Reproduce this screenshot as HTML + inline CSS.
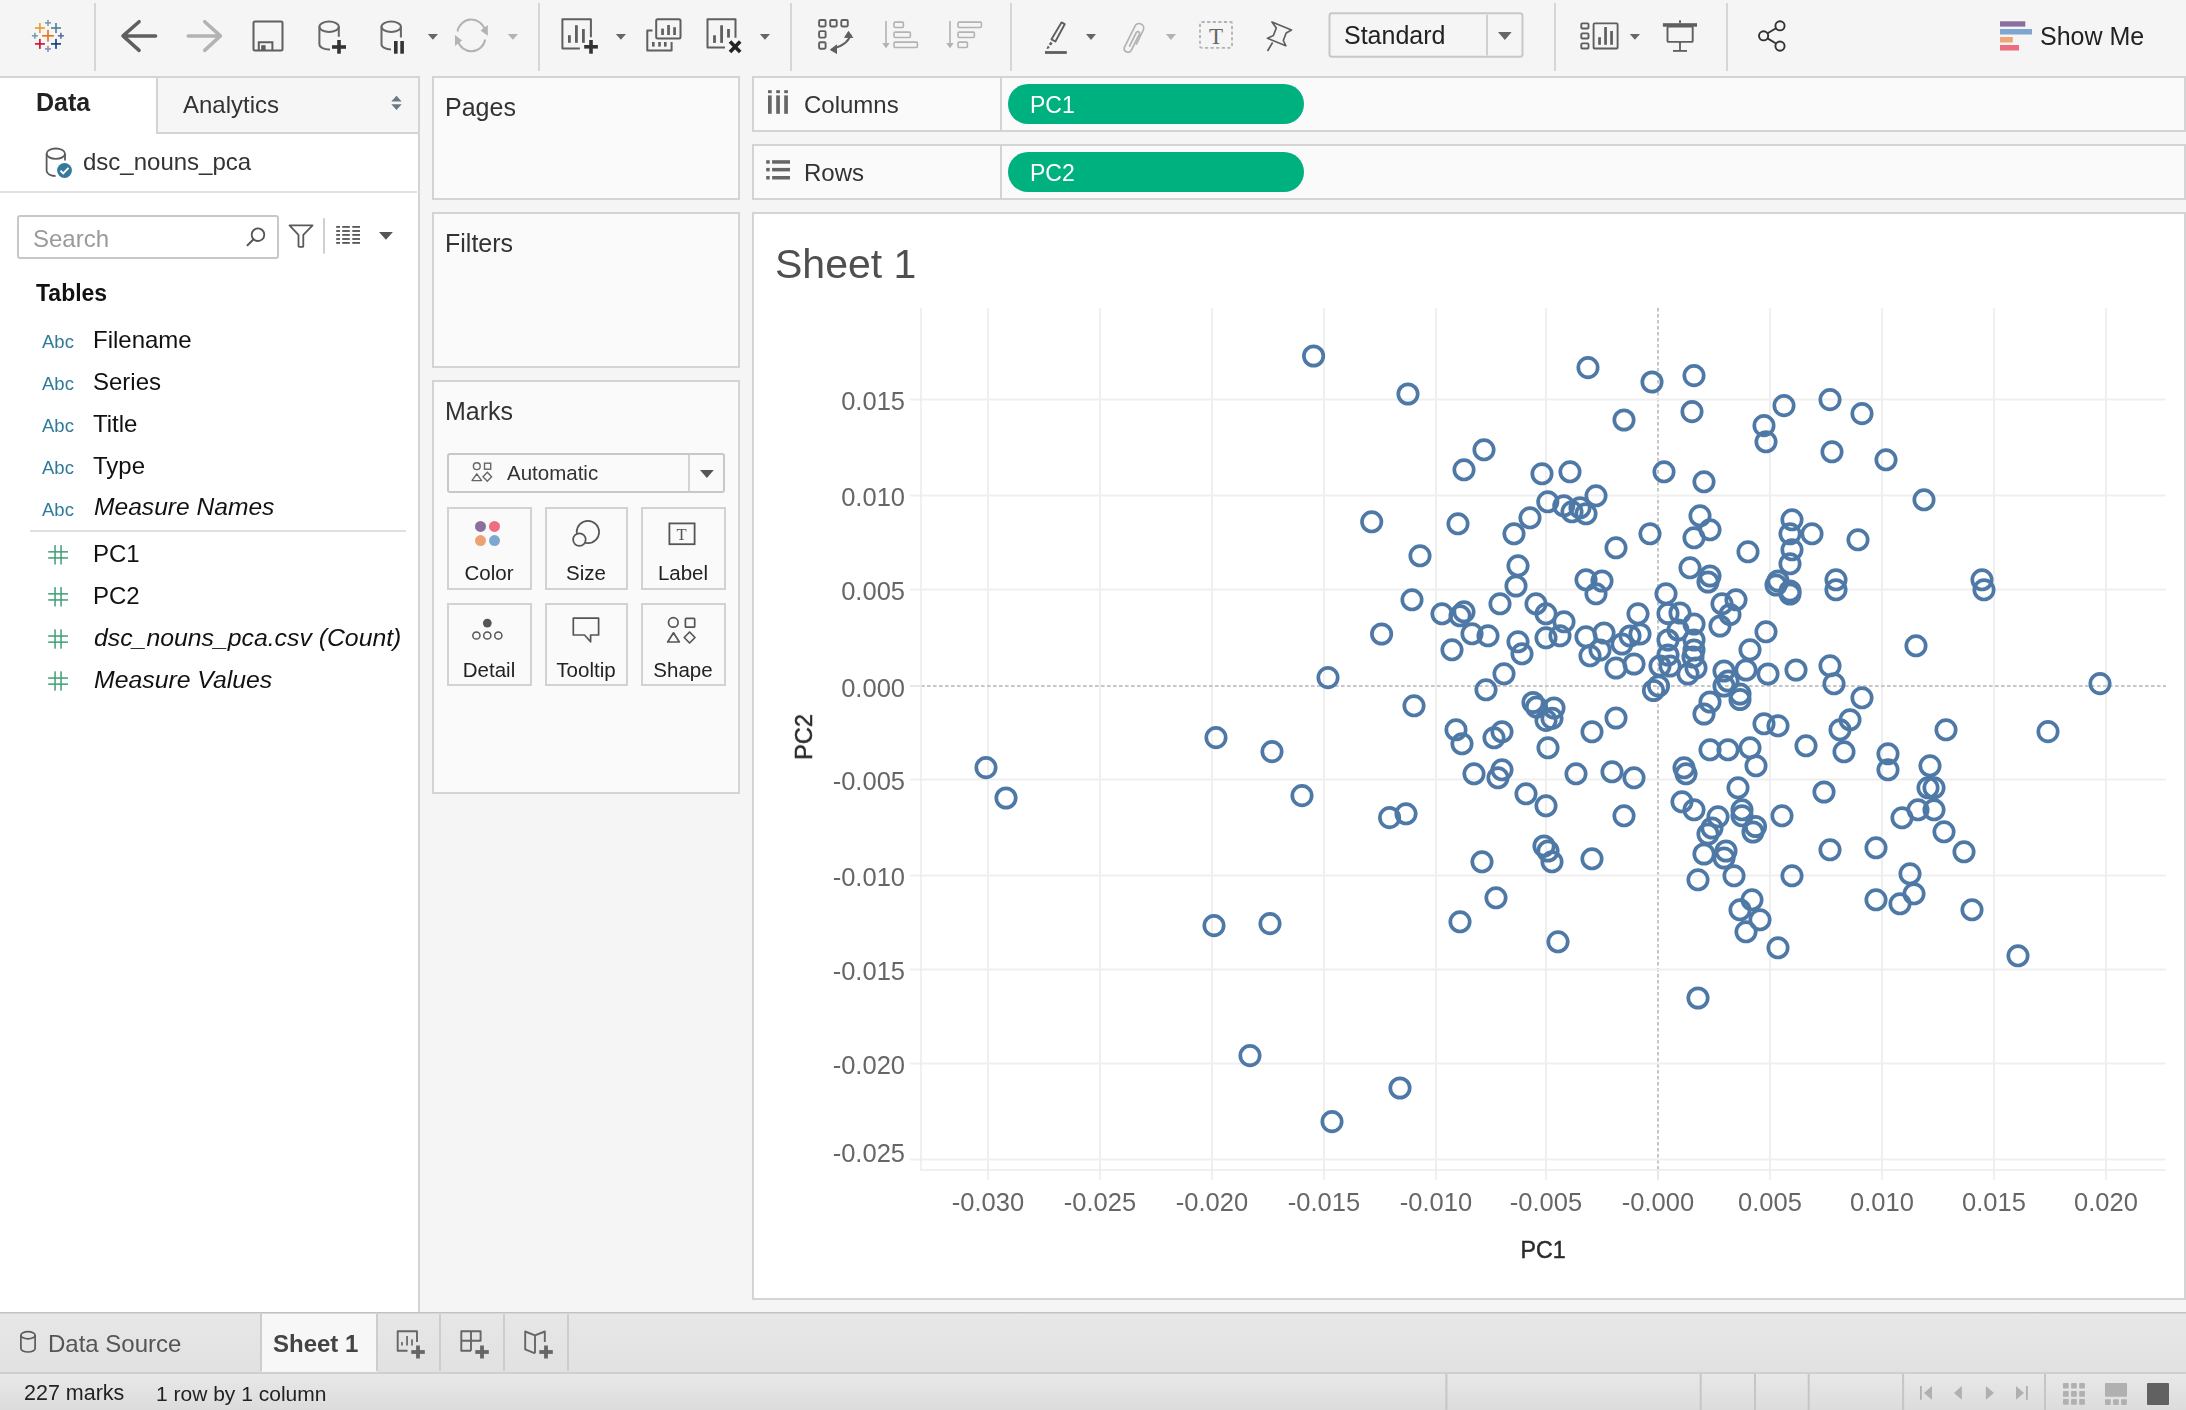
<!DOCTYPE html>
<html><head><meta charset="utf-8"><title>Tableau - Sheet 1</title>
<style>
html,body{margin:0;padding:0;}
body{width:2186px;height:1410px;position:relative;overflow:hidden;background:#f5f5f5;font-family:"Liberation Sans", sans-serif;}
.t{position:absolute;white-space:nowrap;will-change:transform;}
.r{position:absolute;}
.s{position:absolute;overflow:visible;}
</style></head><body>
<div class="r" style="left:0px;top:0px;width:2186px;height:76px;background:#f5f5f5"></div>
<div class="r" style="left:0px;top:76px;width:2186px;height:1236px;background:#f5f5f5"></div>
<div class="r" style="left:0px;top:76px;width:420px;height:1236px;background:#ffffff;border-right:2px solid #d4d4d4;border-top:2px solid #d4d4d4;box-sizing:border-box"></div>
<div class="r" style="left:156px;top:76px;width:264px;height:58px;background:#f6f6f6;border-left:2px solid #d4d4d4;border-bottom:2px solid #d4d4d4;border-top:2px solid #d4d4d4;border-right:2px solid #d4d4d4;box-sizing:border-box"></div>
<div class="r" style="left:0px;top:191px;width:417px;height:2px;background:#e2e2e2"></div>
<div class="r" style="left:432px;top:76px;width:308px;height:124px;background:#fafafa;border:2px solid #d4d4d4;box-sizing:border-box"></div>
<div class="r" style="left:432px;top:212px;width:308px;height:156px;background:#fafafa;border:2px solid #d4d4d4;box-sizing:border-box"></div>
<div class="r" style="left:432px;top:380px;width:308px;height:414px;background:#fafafa;border:2px solid #d4d4d4;box-sizing:border-box"></div>
<div class="r" style="left:752px;top:76px;width:1434px;height:56px;background:#fafafa;border:2px solid #d4d4d4;box-sizing:border-box"></div>
<div class="r" style="left:752px;top:144px;width:1434px;height:56px;background:#fafafa;border:2px solid #d4d4d4;box-sizing:border-box"></div>
<div class="r" style="left:1000px;top:78px;width:2px;height:52px;background:#d4d4d4"></div>
<div class="r" style="left:1000px;top:146px;width:2px;height:52px;background:#d4d4d4"></div>
<div class="r" style="left:752px;top:212px;width:1434px;height:1088px;background:#ffffff;border:2px solid #d4d4d4;box-sizing:border-box"></div>
<div class="r" style="left:0px;top:1312px;width:2186px;height:61px;background:linear-gradient(#e7e7e7,#e1e1e1);border-top:1px solid #c2c2c2;box-shadow:inset 0 1px 0 #d6d6d6;box-sizing:border-box"></div>
<div class="r" style="left:262px;top:1314px;width:115px;height:58px;background:#f7f7f7"></div>
<div class="r" style="left:0px;top:1372px;width:2186px;height:38px;background:linear-gradient(#e8e8e8,#dcdcdc);border-top:2px solid #cfcfcf;box-sizing:border-box"></div>
<div class="r" style="left:94px;top:3px;width:2px;height:68px;background:#d6d6d6"></div>
<div class="r" style="left:538px;top:3px;width:2px;height:68px;background:#d6d6d6"></div>
<div class="r" style="left:790px;top:3px;width:2px;height:68px;background:#d6d6d6"></div>
<div class="r" style="left:1010px;top:3px;width:2px;height:68px;background:#d6d6d6"></div>
<div class="r" style="left:1554px;top:3px;width:2px;height:68px;background:#d6d6d6"></div>
<div class="r" style="left:1726px;top:3px;width:2px;height:68px;background:#d6d6d6"></div>
<svg class="s" style="left:0px;top:0px;" width="2186" height="76" viewBox="0 0 2186 76"><rect x="42.1" y="35.0" width="11.8" height="1.6" fill="#e8701a"/><rect x="47.2" y="29.9" width="1.6" height="11.8" fill="#e8701a"/><rect x="34.9" y="27.2" width="10.0" height="1.6" fill="#eb9a2a"/><rect x="39.1" y="23.0" width="1.6" height="10.0" fill="#eb9a2a"/><rect x="51.0" y="27.2" width="10.0" height="1.6" fill="#4e8197"/><rect x="55.2" y="23.0" width="1.6" height="10.0" fill="#4e8197"/><rect x="34.9" y="43.1" width="10.0" height="1.6" fill="#c8102e"/><rect x="39.1" y="38.9" width="1.6" height="10.0" fill="#c8102e"/><rect x="51.0" y="43.1" width="10.0" height="1.6" fill="#113a7a"/><rect x="55.2" y="38.9" width="1.6" height="10.0" fill="#113a7a"/><rect x="45.0" y="22.15" width="6.0" height="1.5" fill="#6f99a8"/><rect x="47.25" y="19.9" width="1.5" height="6.0" fill="#6f99a8"/><rect x="31.9" y="35.05" width="6.0" height="1.5" fill="#729aa8"/><rect x="34.15" y="32.8" width="1.5" height="6.0" fill="#729aa8"/><rect x="57.9" y="35.05" width="6.0" height="1.5" fill="#5b6798"/><rect x="60.15" y="32.8" width="1.5" height="6.0" fill="#5b6798"/><rect x="45.0" y="48.15" width="6.0" height="1.5" fill="#7f8eb2"/><rect x="47.25" y="45.9" width="1.5" height="6.0" fill="#7f8eb2"/><path d="M139.1 21.7 L123 35.9 L139.1 50.4 M123 35.9 H155.6" stroke="#5f5f5f" stroke-width="3.5" fill="none" stroke-linecap="round" stroke-linejoin="round"/><path d="M204.7 21.7 L220.4 35.9 L204.7 50.4 M220.4 35.9 H188.2" stroke="#b3b3b3" stroke-width="3.5" fill="none" stroke-linecap="round" stroke-linejoin="round"/><rect x="253.5" y="21.4" width="29" height="29" rx="1.5" stroke="#5f5f5f" stroke-width="2" fill="none"/><path d="M258.8 50.4 V42.3 H272.4 V50.4" stroke="#5f5f5f" stroke-width="2" fill="none"/><rect x="261.2" y="45.2" width="4.4" height="5.2" fill="#5f5f5f"/><ellipse cx="329.1" cy="26.7" rx="9.700000000000017" ry="5.2" stroke="#666" stroke-width="2" fill="none"/><path d="M319.4 26.7 V44.3 A9.700000000000017 5.2 0 0 0 330 49.5" stroke="#666" stroke-width="2" fill="none"/><path d="M338.8 26.7 V36.8" stroke="#666" stroke-width="2" fill="none"/><rect x="332" y="45.2" width="14" height="3.6" fill="#333333"/><rect x="337.2" y="40" width="3.6" height="13.7" fill="#333333"/><ellipse cx="391.2" cy="26.7" rx="9.699999999999989" ry="5.2" stroke="#666" stroke-width="2" fill="none"/><path d="M381.5 26.7 V44.3 A9.699999999999989 5.2 0 0 0 391 49.5" stroke="#666" stroke-width="2" fill="none"/><path d="M400.9 26.7 V37.5" stroke="#666" stroke-width="2" fill="none"/><rect x="394" y="41" width="3.6" height="12.7" fill="#333333"/><rect x="400.3" y="41" width="3.6" height="12.7" fill="#333333"/><path d="M427.8 34 H438 L432.9 39.8 Z" fill="#666"/><path d="M457.5 31.5 A14 14 0 0 1 485 30.5" stroke="#b3b3b3" stroke-width="2" fill="none"/><path d="M485.2 39.5 A14 14 0 0 1 457.8 40.5" stroke="#b3b3b3" stroke-width="2" fill="none"/><path d="M480.5 30.5 L487.8 25 L487.8 35.8 Z" fill="#b3b3b3"/><path d="M462 40.5 L455 46 L455 35 Z" fill="#b3b3b3"/><path d="M507.8 34 H518 L512.9 39.8 Z" fill="#b3b3b3"/><path d="M579.9 48.4 H562.4 V19.2 H590.9 V37.2" stroke="#5f5f5f" stroke-width="2" fill="none" stroke-linejoin="round"/><rect x="568.0" y="35.2" width="2.8" height="7.6" fill="#5f5f5f"/><rect x="575.0" y="25.2" width="2.8" height="17.6" fill="#5f5f5f"/><rect x="582.0" y="29.0" width="2.8" height="13.8" fill="#5f5f5f"/><rect x="584.2" y="45" width="13.7" height="3.6" fill="#333333"/><rect x="589.2" y="40" width="3.6" height="13.7" fill="#333333"/><path d="M615.8 34 H626 L620.9 39.8 Z" fill="#666"/><rect x="656.2" y="19.2" width="24.3" height="19.3" rx="1.5" stroke="#5f5f5f" stroke-width="2" fill="none"/><rect x="661.2" y="28.6" width="2.7" height="6.4" fill="#5f5f5f"/><rect x="667.2" y="25" width="2.7" height="10" fill="#5f5f5f"/><rect x="673.2" y="27.2" width="2.7" height="7.8" fill="#5f5f5f"/><path d="M652.5 30.5 H647.3 V50.4 H671.6 V42" stroke="#5f5f5f" stroke-width="2" fill="none" stroke-linejoin="round"/><rect x="652" y="42" width="2.6" height="4.6" fill="#5f5f5f"/><rect x="658.2" y="42" width="2.6" height="4.6" fill="#5f5f5f"/><rect x="664" y="42" width="2.6" height="4.6" fill="#5f5f5f"/><path d="M725 47.4 H707.5 V19.2 H735.5 V37.8" stroke="#5f5f5f" stroke-width="2" fill="none" stroke-linejoin="round"/><rect x="713.1" y="35.3" width="2.8" height="7.6" fill="#5f5f5f"/><rect x="720.2" y="25.3" width="2.8" height="17.6" fill="#5f5f5f"/><rect x="727.1" y="29" width="2.8" height="8.6" fill="#5f5f5f"/><path d="M730 41.5 L740.2 52 M740.2 41.5 L730 52" stroke="#222" stroke-width="3.6"/><path d="M759.9 34 H770 L764.95 39.8 Z" fill="#666"/><rect x="819.1" y="20.0" width="6.5" height="6.5" rx="1.2" stroke="#5f5f5f" stroke-width="1.9" fill="none"/><rect x="830.1999999999999" y="20.0" width="6.5" height="6.5" rx="1.2" stroke="#5f5f5f" stroke-width="1.9" fill="none"/><rect x="841.3" y="20.0" width="6.5" height="6.5" rx="1.2" stroke="#5f5f5f" stroke-width="1.9" fill="none"/><rect x="819.1" y="31.099999999999998" width="6.5" height="6.5" rx="1.2" stroke="#5f5f5f" stroke-width="1.9" fill="none"/><rect x="819.1" y="42.199999999999996" width="6.5" height="6.5" rx="1.2" stroke="#5f5f5f" stroke-width="1.9" fill="none"/><path d="M834 48.3 Q849 44 850.5 34" stroke="#5f5f5f" stroke-width="1.9" fill="none"/><path d="M848.5 31 L852.8 37.5 L844.5 37.5 Z M830 50 L837 45.5 L837 54 Z" fill="#5f5f5f"/><path d="M848.5 31 L853.3 38 L844 37.7 Z" fill="#5f5f5f"/><path d="M830 49.5 L837 44.2 L836.8 53.5 Z" fill="#5f5f5f"/><path d="M886 21 V45" stroke="#b3b3b3" stroke-width="1.6"/><path d="M882.2 43 H889.8 L886 48.3 Z" fill="#b3b3b3"/><rect x="894" y="22.1" width="9.4" height="5.4" rx="1.2" stroke="#b3b3b3" stroke-width="1.6" fill="none"/><rect x="894" y="32.1" width="16.4" height="5.4" rx="1.2" stroke="#b3b3b3" stroke-width="1.6" fill="none"/><rect x="894" y="42.099999999999994" width="23.4" height="5.4" rx="1.2" stroke="#b3b3b3" stroke-width="1.6" fill="none"/><path d="M950 21 V45" stroke="#b3b3b3" stroke-width="1.6"/><path d="M946.2 43 H953.8 L950 48.3 Z" fill="#b3b3b3"/><rect x="958" y="22.1" width="23.4" height="5.4" rx="1.2" stroke="#b3b3b3" stroke-width="1.6" fill="none"/><rect x="958" y="32.1" width="16.4" height="5.4" rx="1.2" stroke="#b3b3b3" stroke-width="1.6" fill="none"/><rect x="958" y="42.099999999999994" width="9.4" height="5.4" rx="1.2" stroke="#b3b3b3" stroke-width="1.6" fill="none"/><path d="M1061.5 22.4 L1064.7 24.2 L1055.4 41.5 L1051.5 39.3 Z" stroke="#5f5f5f" stroke-width="1.9" fill="none" stroke-linejoin="round"/><path d="M1050.5 41.8 L1052.6 43.2 L1051 45.5 L1048.8 44.3 Z M1047.8 45.8 L1049.8 47 L1048 49 L1046.5 48.5 Z" fill="#5f5f5f"/><rect x="1045" y="51.1" width="21.8" height="2.8" fill="#5f5f5f"/><path d="M1086 34 H1096 L1091.0 40 Z" fill="#666"/><path d="M1136.5 44 L1143.3 30 A4.5 4.5 0 0 0 1135 26.2 L1124.5 47 A3.8 3.8 0 0 0 1131.2 50.5 L1139.5 34 A1.8 1.8 0 0 0 1136.4 32.3 L1129.6 46" stroke="#b3b3b3" stroke-width="1.7" fill="none" stroke-linecap="round"/><path d="M1165.9 34 H1176 L1170.95 40 Z" fill="#b3b3b3"/><rect x="1200" y="22" width="32" height="25.8" rx="1.5" stroke="#b3b3b3" stroke-width="1.8" fill="none" stroke-dasharray="3.2 2.4"/><text x="1216.1" y="43.6" font-family="Liberation Serif" font-size="23" fill="#666" text-anchor="middle">T</text><path d="M1272 22 L1291.5 30 L1286.2 33 L1283.3 40.5 L1285.8 45.7 L1267.5 38.3 L1273.4 35.5 L1276.3 28 Z M1272.6 42.5 L1267.5 51" stroke="#5f5f5f" stroke-width="1.7" fill="none" stroke-linejoin="round"/><rect x="1329.5" y="13.2" width="193" height="43.5" rx="2.5" stroke="#c8c8c8" stroke-width="2" fill="#f5f5f5"/><rect x="1486" y="14.8" width="2" height="40.7" fill="#d0d0d0"/><path d="M1498 32 H1511.7 L1504.85 40 Z" fill="#666"/><rect x="1581.3" y="23.4" width="7.2" height="5.1" rx="1" stroke="#5f5f5f" stroke-width="1.9" fill="none"/><rect x="1581.3" y="33.4" width="7.2" height="5.1" rx="1" stroke="#5f5f5f" stroke-width="1.9" fill="none"/><rect x="1581.3" y="43.4" width="7.2" height="5.1" rx="1" stroke="#5f5f5f" stroke-width="1.9" fill="none"/><rect x="1593.6" y="23.4" width="24" height="25.1" rx="1" stroke="#5f5f5f" stroke-width="1.9" fill="none"/><rect x="1598.2" y="37.2" width="2.7" height="7.6" fill="#5f5f5f"/><rect x="1604.2" y="27" width="2.7" height="17.8" fill="#5f5f5f"/><rect x="1610.2" y="31" width="2.7" height="13.8" fill="#5f5f5f"/><path d="M1629.8 34 H1640 L1634.9 39.8 Z" fill="#666"/><rect x="1662.9" y="23.2" width="34.1" height="3.5" fill="#5f5f5f"/><rect x="1679.1" y="20.2" width="1.8" height="3" fill="#5f5f5f"/><rect x="1667.5" y="26.6" width="25.2" height="15.3" rx="1" stroke="#5f5f5f" stroke-width="1.9" fill="none"/><rect x="1679.1" y="42" width="1.8" height="8.5" fill="#5f5f5f"/><rect x="1673" y="50" width="14" height="1.8" fill="#5f5f5f"/><circle cx="1780" cy="25.8" r="4.6" stroke="#333333" stroke-width="1.9" fill="none"/><circle cx="1763.6" cy="35.8" r="4.6" stroke="#333333" stroke-width="1.9" fill="none"/><circle cx="1780" cy="46.1" r="4.6" stroke="#333333" stroke-width="1.9" fill="none"/><path d="M1767.6 33.3 L1776 28.2 M1767.6 38.4 L1776 43.5" stroke="#333333" stroke-width="1.9"/><rect x="2000" y="21.3" width="25.3" height="5.3" fill="#8a6e9e"/><rect x="2000" y="29" width="32" height="5.5" fill="#7ea6d0"/><rect x="2000" y="37" width="12.8" height="5.5" fill="#eea577"/><rect x="2000" y="45" width="19" height="5.5" fill="#ec6d7e"/></svg>
<div class="t" style="left:1343.7px;top:23.44px;font-size:25px;line-height:25px;color:#222;font-weight:normal;font-style:normal;">Standard</div>
<div class="t" style="left:2039.5px;top:24.44px;font-size:25px;line-height:25px;color:#222;font-weight:normal;font-style:normal;">Show Me</div>
<div class="t" style="left:36px;top:90.44px;font-size:25px;line-height:25px;color:#222;font-weight:bold;font-style:normal;">Data</div>
<div class="t" style="left:183px;top:92.68px;font-size:24px;line-height:24px;color:#333;font-weight:normal;font-style:normal;">Analytics</div>
<svg class="s" style="left:380px;top:90px;" width="30" height="30" viewBox="380 90 30 30"><path d="M391.3 101.5 L396.5 95.8 L401.7 101.5 Z M391.3 104.3 L396.5 110 L401.7 104.3 Z" fill="#6b7886"/></svg>
<svg class="s" style="left:30px;top:140px;" width="50" height="45" viewBox="30 140 50 45"><ellipse cx="55.8" cy="153.7" rx="9.2" ry="5.2" stroke="#5a5a5a" stroke-width="1.8" fill="none"/><path d="M46.6 153.7 V170.8 A9.2 5.2 0 0 0 55.5 176" stroke="#5a5a5a" stroke-width="1.8" fill="none"/><path d="M65 153.7 V160.4" stroke="#5a5a5a" stroke-width="1.8" fill="none"/><circle cx="64.5" cy="170.5" r="7.4" fill="#35799c"/><path d="M60.5 170.6 L63.2 173.3 L68.5 167.8" stroke="#fff" stroke-width="1.9" fill="none"/></svg>
<div class="t" style="left:83px;top:150.28px;font-size:24px;line-height:24px;color:#333;font-weight:normal;font-style:normal;">dsc_nouns_pca</div>
<div class="r" style="left:17px;top:215px;width:262px;height:44px;border:2px solid #c8c8c8;border-radius:3px;background:#fff;box-sizing:border-box"></div>
<div class="t" style="left:33px;top:226.68px;font-size:24px;line-height:24px;color:#9a9a9a;font-weight:normal;font-style:normal;">Search</div>
<svg class="s" style="left:240px;top:210px;" width="170" height="50" viewBox="240 210 170 50"><circle cx="258" cy="234.7" r="6.3" stroke="#555" stroke-width="1.8" fill="none"/><path d="M253.6 239.3 L247.5 245.3" stroke="#555" stroke-width="1.9" stroke-linecap="round"/><path d="M289.5 225.3 H312.6 L303.3 234.8 V246 A0.8 0.8 0 0 1 302.5 246.8 H299.3 A0.8 0.8 0 0 1 298.5 246 V234.8 Z" stroke="#5a5a5a" stroke-width="1.8" fill="none" stroke-linejoin="round"/><rect x="323" y="218.2" width="2" height="35.4" fill="#d0d0d0"/><rect x="336.2" y="226.0" width="3.8" height="1.8" fill="#555"/><rect x="342.2" y="226.0" width="7.6" height="1.8" fill="#555"/><rect x="352.3" y="226.0" width="7.7" height="1.8" fill="#555"/><rect x="336.2" y="230.1" width="3.8" height="1.8" fill="#555"/><rect x="342.2" y="230.1" width="7.6" height="1.8" fill="#555"/><rect x="352.3" y="230.1" width="7.7" height="1.8" fill="#555"/><rect x="336.2" y="234.0" width="3.8" height="1.8" fill="#555"/><rect x="342.2" y="234.0" width="7.6" height="1.8" fill="#555"/><rect x="352.3" y="234.0" width="7.7" height="1.8" fill="#555"/><rect x="336.2" y="238.1" width="3.8" height="1.8" fill="#555"/><rect x="342.2" y="238.1" width="7.6" height="1.8" fill="#555"/><rect x="352.3" y="238.1" width="7.7" height="1.8" fill="#555"/><rect x="336.2" y="242.0" width="3.8" height="1.8" fill="#555"/><rect x="342.2" y="242.0" width="7.6" height="1.8" fill="#555"/><rect x="352.3" y="242.0" width="7.7" height="1.8" fill="#555"/><path d="M379 232 H392.9 L385.95 239.8 Z" fill="#555"/></svg>
<div class="t" style="left:36px;top:282.03px;font-size:23px;line-height:23px;color:#111;font-weight:bold;font-style:normal;">Tables</div>
<div class="t" style="left:42px;top:333.14px;font-size:18.5px;line-height:18.5px;color:#2f7a9c;font-weight:normal;font-style:normal;">Abc</div>
<div class="t" style="left:92.5px;top:328.48px;font-size:24px;line-height:24px;color:#111;font-weight:normal;font-style:normal;">Filename</div>
<div class="t" style="left:42px;top:374.94px;font-size:18.5px;line-height:18.5px;color:#2f7a9c;font-weight:normal;font-style:normal;">Abc</div>
<div class="t" style="left:92.5px;top:370.28px;font-size:24px;line-height:24px;color:#111;font-weight:normal;font-style:normal;">Series</div>
<div class="t" style="left:42px;top:416.94px;font-size:18.5px;line-height:18.5px;color:#2f7a9c;font-weight:normal;font-style:normal;">Abc</div>
<div class="t" style="left:92.5px;top:412.28px;font-size:24px;line-height:24px;color:#111;font-weight:normal;font-style:normal;">Title</div>
<div class="t" style="left:42px;top:458.74px;font-size:18.5px;line-height:18.5px;color:#2f7a9c;font-weight:normal;font-style:normal;">Abc</div>
<div class="t" style="left:92.5px;top:454.08px;font-size:24px;line-height:24px;color:#111;font-weight:normal;font-style:normal;">Type</div>
<div class="t" style="left:42px;top:500.54px;font-size:18.5px;line-height:18.5px;color:#2f7a9c;font-weight:normal;font-style:normal;">Abc</div>
<div class="t" style="left:94px;top:495.38px;font-size:24.6px;line-height:24.6px;color:#111;font-weight:normal;font-style:italic;">Measure Names</div>
<div class="r" style="left:30px;top:530px;width:376px;height:2px;background:#e0e0e0"></div>
<div class="t" style="left:93px;top:542.48px;font-size:24px;line-height:24px;color:#111;font-weight:normal;font-style:normal;">PC1</div>
<div class="t" style="left:93px;top:584.48px;font-size:24px;line-height:24px;color:#111;font-weight:normal;font-style:normal;">PC2</div>
<div class="t" style="left:94px;top:626.01px;font-size:24.8px;line-height:24.8px;color:#111;font-weight:normal;font-style:italic;">dsc_nouns_pca.csv (Count)</div>
<div class="t" style="left:94px;top:668.01px;font-size:24.8px;line-height:24.8px;color:#111;font-weight:normal;font-style:italic;">Measure Values</div>
<svg class="s" style="left:40px;top:530px;" width="40" height="170" viewBox="40 530 40 170"><rect x="54.3" y="545.0999999999999" width="1.5" height="19.4" fill="#3f9f76"/><rect x="60.3" y="545.0999999999999" width="1.5" height="19.4" fill="#3f9f76"/><rect x="48.2" y="551.0999999999999" width="19.8" height="1.5" fill="#3f9f76"/><rect x="48.2" y="557.1999999999999" width="19.8" height="1.5" fill="#3f9f76"/><rect x="54.3" y="587.0999999999999" width="1.5" height="19.4" fill="#3f9f76"/><rect x="60.3" y="587.0999999999999" width="1.5" height="19.4" fill="#3f9f76"/><rect x="48.2" y="593.0999999999999" width="19.8" height="1.5" fill="#3f9f76"/><rect x="48.2" y="599.1999999999999" width="19.8" height="1.5" fill="#3f9f76"/><rect x="54.3" y="629.3" width="1.5" height="19.4" fill="#3f9f76"/><rect x="60.3" y="629.3" width="1.5" height="19.4" fill="#3f9f76"/><rect x="48.2" y="635.3" width="19.8" height="1.5" fill="#3f9f76"/><rect x="48.2" y="641.4" width="19.8" height="1.5" fill="#3f9f76"/><rect x="54.3" y="671.3" width="1.5" height="19.4" fill="#3f9f76"/><rect x="60.3" y="671.3" width="1.5" height="19.4" fill="#3f9f76"/><rect x="48.2" y="677.3" width="19.8" height="1.5" fill="#3f9f76"/><rect x="48.2" y="683.4" width="19.8" height="1.5" fill="#3f9f76"/></svg>
<div class="t" style="left:445px;top:95.34px;font-size:25px;line-height:25px;color:#333;font-weight:normal;font-style:normal;">Pages</div>
<div class="t" style="left:445px;top:231.14px;font-size:25px;line-height:25px;color:#333;font-weight:normal;font-style:normal;">Filters</div>
<div class="t" style="left:444.8px;top:399.34px;font-size:25px;line-height:25px;color:#333;font-weight:normal;font-style:normal;">Marks</div>
<div class="r" style="left:447px;top:453px;width:278px;height:40px;border:2px solid #c8c8c8;border-radius:3px;background:#fafafa;box-sizing:border-box"></div>
<div class="r" style="left:688px;top:455px;width:2px;height:36px;background:#d4d4d4"></div>
<svg class="s" style="left:440px;top:450px;" width="300" height="50" viewBox="440 450 300 50"><path d="M700 470 H713.8 L706.9 478 Z" fill="#555"/><circle cx="476.8" cy="466.2" r="3.4" stroke="#666" stroke-width="1.4" fill="none"/><rect x="484.5" y="463.2" width="6.2" height="6" stroke="#666" stroke-width="1.4" fill="none"/><path d="M476.8 473.8 L481.6 480.6 H472 Z" stroke="#666" stroke-width="1.4" fill="none" stroke-linejoin="round"/><path d="M487.3 472.3 L491.6 476.8 L487.3 481.3 L483 476.8 Z" stroke="#666" stroke-width="1.4" fill="none"/></svg>
<div class="t" style="left:507.2px;top:463.15px;font-size:20.5px;line-height:20.5px;color:#333;font-weight:normal;font-style:normal;">Automatic</div>
<div class="r" style="left:447px;top:506.5px;width:84.5px;height:83px;border:2px solid #d2d2d2;background:#fafafa;box-sizing:border-box"></div>
<div class="t" style="left:488.7px;top:563.35px;font-size:20.5px;line-height:20.5px;color:#222;font-weight:normal;font-style:normal;transform:translateX(-50%);">Color</div>
<div class="r" style="left:544.5px;top:506.5px;width:83px;height:83px;border:2px solid #d2d2d2;background:#fafafa;box-sizing:border-box"></div>
<div class="t" style="left:586px;top:563.35px;font-size:20.5px;line-height:20.5px;color:#222;font-weight:normal;font-style:normal;transform:translateX(-50%);">Size</div>
<div class="r" style="left:640.5px;top:506.5px;width:85px;height:83px;border:2px solid #d2d2d2;background:#fafafa;box-sizing:border-box"></div>
<div class="t" style="left:683px;top:563.35px;font-size:20.5px;line-height:20.5px;color:#222;font-weight:normal;font-style:normal;transform:translateX(-50%);">Label</div>
<div class="r" style="left:447px;top:602.5px;width:84.5px;height:83px;border:2px solid #d2d2d2;background:#fafafa;box-sizing:border-box"></div>
<div class="t" style="left:488.7px;top:659.65px;font-size:20.5px;line-height:20.5px;color:#222;font-weight:normal;font-style:normal;transform:translateX(-50%);">Detail</div>
<div class="r" style="left:544.5px;top:602.5px;width:83px;height:83px;border:2px solid #d2d2d2;background:#fafafa;box-sizing:border-box"></div>
<div class="t" style="left:586px;top:659.65px;font-size:20.5px;line-height:20.5px;color:#222;font-weight:normal;font-style:normal;transform:translateX(-50%);">Tooltip</div>
<div class="r" style="left:640.5px;top:602.5px;width:85px;height:83px;border:2px solid #d2d2d2;background:#fafafa;box-sizing:border-box"></div>
<div class="t" style="left:683px;top:659.65px;font-size:20.5px;line-height:20.5px;color:#222;font-weight:normal;font-style:normal;transform:translateX(-50%);">Shape</div>
<svg class="s" style="left:440px;top:500px;" width="300" height="190" viewBox="440 500 300 190"><circle cx="480.5" cy="526.4" r="5.5" fill="#8b6f9c"/><circle cx="494.5" cy="526.4" r="5.5" fill="#ee6e80"/><circle cx="480.5" cy="540.6" r="5.5" fill="#eda276"/><circle cx="494.5" cy="540.6" r="5.5" fill="#7ea7d0"/><circle cx="587.9" cy="532" r="11.2" stroke="#555" stroke-width="1.7" fill="none"/><circle cx="579.4" cy="539.6" r="6.3" stroke="#555" stroke-width="1.7" fill="#fafafa"/><rect x="669.4" y="523.4" width="25.2" height="20.8" stroke="#555" stroke-width="1.8" fill="none"/><text x="681.5" y="540.3" font-family="Liberation Serif" font-size="16.5" fill="#555" text-anchor="middle">T</text><circle cx="487.3" cy="623.1" r="4.4" fill="#555"/><circle cx="476.4" cy="635.5" r="3.6" stroke="#555" stroke-width="1.5" fill="none"/><circle cx="487.3" cy="635.5" r="3.6" stroke="#555" stroke-width="1.5" fill="none"/><circle cx="498.3" cy="635.5" r="3.6" stroke="#555" stroke-width="1.5" fill="none"/><path d="M573.3 618.2 H598.6 V635 H590.6 V641.8 L584.5 635 H573.3 Z" stroke="#555" stroke-width="1.7" fill="none" stroke-linejoin="round"/><circle cx="673.3" cy="622.4" r="4.8" stroke="#555" stroke-width="1.7" fill="none"/><rect x="685.4" y="618.4" width="9.3" height="8.8" rx="1" stroke="#555" stroke-width="1.7" fill="none"/><path d="M673.5 632.8 L679.3 642 H667.7 Z" stroke="#555" stroke-width="1.7" fill="none" stroke-linejoin="round"/><path d="M689.6 632 L695 637.5 L689.6 643 L684.2 637.5 Z" stroke="#555" stroke-width="1.7" fill="none" stroke-linejoin="round"/></svg>
<svg class="s" style="left:760px;top:85px;" width="40" height="100" viewBox="760 85 40 100"><rect x="768" y="90.2" width="3.7" height="3" fill="#666"/><rect x="768" y="95.4" width="3.7" height="18.4" fill="#666"/><rect x="776.2" y="90.2" width="3.7" height="3" fill="#666"/><rect x="776.2" y="95.4" width="3.7" height="18.4" fill="#666"/><rect x="784.2" y="90.2" width="3.7" height="3" fill="#666"/><rect x="784.2" y="95.4" width="3.7" height="18.4" fill="#666"/><rect x="766.2" y="160.2" width="3.5" height="3.5" fill="#666"/><rect x="772.1" y="160.2" width="17.9" height="3.5" fill="#666"/><rect x="766.2" y="167.9" width="3.5" height="3.5" fill="#666"/><rect x="772.1" y="167.9" width="17.9" height="3.5" fill="#666"/><rect x="766.2" y="176" width="3.5" height="3.5" fill="#666"/><rect x="772.1" y="176" width="17.9" height="3.5" fill="#666"/></svg>
<div class="t" style="left:804px;top:93.48px;font-size:24px;line-height:24px;color:#333;font-weight:normal;font-style:normal;">Columns</div>
<div class="t" style="left:803.5px;top:161.48px;font-size:24px;line-height:24px;color:#333;font-weight:normal;font-style:normal;">Rows</div>
<div class="r" style="left:1008px;top:84.2px;width:296px;height:39.5px;background:#00b180;border-radius:20px"></div>
<div class="r" style="left:1008px;top:152px;width:296px;height:39.7px;background:#00b180;border-radius:20px"></div>
<div class="t" style="left:1030px;top:93.83px;font-size:23px;line-height:23px;color:#ffffff;font-weight:normal;font-style:normal;">PC1</div>
<div class="t" style="left:1030px;top:161.83px;font-size:23px;line-height:23px;color:#ffffff;font-weight:normal;font-style:normal;">PC2</div>
<div class="t" style="left:774.5px;top:243.89px;font-size:41px;line-height:41px;color:#4f4f4f;font-weight:normal;font-style:normal;">Sheet 1</div>
<svg class="s" style="left:754px;top:214px;" width="1430" height="1084" viewBox="754 214 1430 1084"><path d="M988 308 V1180" stroke="#efefef" stroke-width="2"/><path d="M1100 308 V1180" stroke="#efefef" stroke-width="2"/><path d="M1212 308 V1180" stroke="#efefef" stroke-width="2"/><path d="M1324 308 V1180" stroke="#efefef" stroke-width="2"/><path d="M1436 308 V1180" stroke="#efefef" stroke-width="2"/><path d="M1546 308 V1180" stroke="#efefef" stroke-width="2"/><path d="M1658 308 V1170" stroke="#c6c6c6" stroke-width="2" stroke-dasharray="3.6 2.4"/><path d="M1658 1170 V1180" stroke="#e8e8e8" stroke-width="2"/><path d="M1770 308 V1180" stroke="#efefef" stroke-width="2"/><path d="M1882 308 V1180" stroke="#efefef" stroke-width="2"/><path d="M1994 308 V1180" stroke="#efefef" stroke-width="2"/><path d="M2106 308 V1180" stroke="#efefef" stroke-width="2"/><path d="M910 399.6 H2166" stroke="#efefef" stroke-width="2"/><path d="M910 495.6 H2166" stroke="#efefef" stroke-width="2"/><path d="M910 589.6 H2166" stroke="#efefef" stroke-width="2"/><path d="M910 686 H921" stroke="#e8e8e8" stroke-width="2"/><path d="M921 686 H2166" stroke="#c6c6c6" stroke-width="2" stroke-dasharray="3.6 2.4"/><path d="M910 779.6 H2166" stroke="#efefef" stroke-width="2"/><path d="M910 875.6 H2166" stroke="#efefef" stroke-width="2"/><path d="M910 969.6 H2166" stroke="#efefef" stroke-width="2"/><path d="M910 1063.6 H2166" stroke="#efefef" stroke-width="2"/><path d="M910 1159.6 H2166" stroke="#efefef" stroke-width="2"/><path d="M921 308 V1170 H2166" stroke="#ebebeb" stroke-width="1.5" fill="none"/><g stroke="#4e79a7" stroke-width="3.7" fill="none"><circle cx="1313.6" cy="356" r="9.7"/><circle cx="1408" cy="394" r="9.7"/><circle cx="1588" cy="367.6" r="9.7"/><circle cx="1652" cy="382" r="9.7"/><circle cx="1694" cy="375.6" r="9.7"/><circle cx="1692" cy="411.6" r="9.7"/><circle cx="1784" cy="405.6" r="9.7"/><circle cx="1624" cy="420" r="9.7"/><circle cx="1764" cy="425.6" r="9.7"/><circle cx="1830" cy="399.6" r="9.7"/><circle cx="1862" cy="413.6" r="9.7"/><circle cx="986" cy="767.6" r="9.7"/><circle cx="1006" cy="798" r="9.7"/><circle cx="1216" cy="737.6" r="9.7"/><circle cx="1272" cy="751.6" r="9.7"/><circle cx="1302" cy="795.6" r="9.7"/><circle cx="1328" cy="677.6" r="9.7"/><circle cx="1214" cy="925.6" r="9.7"/><circle cx="1270" cy="923.6" r="9.7"/><circle cx="1250" cy="1055.6" r="9.7"/><circle cx="1332" cy="1121.6" r="9.7"/><circle cx="1371.7" cy="521.8" r="9.7"/><circle cx="1381.6" cy="634" r="9.7"/><circle cx="1389.6" cy="817.6" r="9.7"/><circle cx="1698" cy="998" r="9.7"/><circle cx="1400" cy="1088" r="9.7"/><circle cx="2100" cy="683.6" r="9.7"/><circle cx="2048" cy="731.6" r="9.7"/><circle cx="1484" cy="449.8" r="9.7"/><circle cx="1464" cy="469.8" r="9.7"/><circle cx="1542" cy="473.8" r="9.7"/><circle cx="1570" cy="471.8" r="9.7"/><circle cx="1596" cy="495.8" r="9.7"/><circle cx="1547.8" cy="501.8" r="9.7"/><circle cx="1563.8" cy="505.8" r="9.7"/><circle cx="1580" cy="507.8" r="9.7"/><circle cx="1572" cy="511.8" r="9.7"/><circle cx="1586" cy="513.8" r="9.7"/><circle cx="1530" cy="517.8" r="9.7"/><circle cx="1458" cy="523.8" r="9.7"/><circle cx="1514" cy="533.8" r="9.7"/><circle cx="1420" cy="555.8" r="9.7"/><circle cx="1518" cy="565.8" r="9.7"/><circle cx="1766" cy="441.8" r="9.7"/><circle cx="1664" cy="471.8" r="9.7"/><circle cx="1704" cy="481.8" r="9.7"/><circle cx="1700" cy="515.8" r="9.7"/><circle cx="1710" cy="529.8" r="9.7"/><circle cx="1694" cy="537.8" r="9.7"/><circle cx="1650" cy="533.8" r="9.7"/><circle cx="1616" cy="547.8" r="9.7"/><circle cx="1748" cy="551.8" r="9.7"/><circle cx="1792" cy="519.8" r="9.7"/><circle cx="1790" cy="533.8" r="9.7"/><circle cx="1812" cy="533.8" r="9.7"/><circle cx="1792" cy="549.8" r="9.7"/><circle cx="1790" cy="563.8" r="9.7"/><circle cx="1690" cy="567.8" r="9.7"/><circle cx="1832" cy="451.8" r="9.7"/><circle cx="1886" cy="459.8" r="9.7"/><circle cx="1924" cy="499.8" r="9.7"/><circle cx="1858" cy="539.8" r="9.7"/><circle cx="1516" cy="586" r="9.7"/><circle cx="1412" cy="599.8" r="9.7"/><circle cx="1500" cy="603.8" r="9.7"/><circle cx="1536" cy="603.8" r="9.7"/><circle cx="1442" cy="613.8" r="9.7"/><circle cx="1464" cy="611.8" r="9.7"/><circle cx="1460" cy="615.8" r="9.7"/><circle cx="1546" cy="613.8" r="9.7"/><circle cx="1564" cy="621.8" r="9.7"/><circle cx="1586" cy="579.8" r="9.7"/><circle cx="1602" cy="581" r="9.7"/><circle cx="1596" cy="593.8" r="9.7"/><circle cx="1472" cy="633.8" r="9.7"/><circle cx="1488" cy="635.8" r="9.7"/><circle cx="1518" cy="641.8" r="9.7"/><circle cx="1522" cy="653.8" r="9.7"/><circle cx="1546" cy="637.8" r="9.7"/><circle cx="1560" cy="635.8" r="9.7"/><circle cx="1586" cy="636.8" r="9.7"/><circle cx="1604" cy="633" r="9.7"/><circle cx="1590" cy="655.8" r="9.7"/><circle cx="1600" cy="650" r="9.7"/><circle cx="1452" cy="649.8" r="9.7"/><circle cx="1504" cy="673.8" r="9.7"/><circle cx="1486" cy="689.8" r="9.7"/><circle cx="1414" cy="705.8" r="9.7"/><circle cx="1533" cy="702.5" r="9.7"/><circle cx="1536.5" cy="707" r="9.7"/><circle cx="1554" cy="708" r="9.7"/><circle cx="1666" cy="593.8" r="9.7"/><circle cx="1638" cy="613.8" r="9.7"/><circle cx="1668" cy="613.5" r="9.7"/><circle cx="1680" cy="613" r="9.7"/><circle cx="1694" cy="624" r="9.7"/><circle cx="1722" cy="603.8" r="9.7"/><circle cx="1736" cy="599.8" r="9.7"/><circle cx="1730" cy="614.5" r="9.7"/><circle cx="1720" cy="626" r="9.7"/><circle cx="1766" cy="631.8" r="9.7"/><circle cx="1750" cy="649.8" r="9.7"/><circle cx="1640" cy="634" r="9.7"/><circle cx="1630" cy="636" r="9.7"/><circle cx="1622" cy="644" r="9.7"/><circle cx="1668" cy="640" r="9.7"/><circle cx="1678" cy="630" r="9.7"/><circle cx="1694" cy="640" r="9.7"/><circle cx="1694" cy="650" r="9.7"/><circle cx="1693" cy="657" r="9.7"/><circle cx="1668" cy="655" r="9.7"/><circle cx="1670" cy="666" r="9.7"/><circle cx="1660" cy="666" r="9.7"/><circle cx="1688" cy="674" r="9.7"/><circle cx="1696" cy="668" r="9.7"/><circle cx="1616" cy="668" r="9.7"/><circle cx="1634" cy="664" r="9.7"/><circle cx="1658.5" cy="686" r="9.7"/><circle cx="1653.5" cy="690.5" r="9.7"/><circle cx="1724" cy="671" r="9.7"/><circle cx="1746" cy="670" r="9.7"/><circle cx="1768" cy="674" r="9.7"/><circle cx="1796" cy="670" r="9.7"/><circle cx="1728" cy="681" r="9.7"/><circle cx="1724" cy="686" r="9.7"/><circle cx="1740" cy="694" r="9.7"/><circle cx="1740" cy="699.5" r="9.7"/><circle cx="1710" cy="702" r="9.7"/><circle cx="1776" cy="585" r="9.7"/><circle cx="1778" cy="581" r="9.7"/><circle cx="1790" cy="591" r="9.7"/><circle cx="1790" cy="594" r="9.7"/><circle cx="1710" cy="576" r="9.7"/><circle cx="1708" cy="582" r="9.7"/><circle cx="1836" cy="579.8" r="9.7"/><circle cx="1836" cy="589.8" r="9.7"/><circle cx="1982" cy="579.8" r="9.7"/><circle cx="1984" cy="589.8" r="9.7"/><circle cx="1916" cy="645.8" r="9.7"/><circle cx="1830" cy="665.8" r="9.7"/><circle cx="1834" cy="683.8" r="9.7"/><circle cx="1862" cy="697.8" r="9.7"/><circle cx="1546" cy="720.4" r="9.7"/><circle cx="1552" cy="718.4" r="9.7"/><circle cx="1456" cy="729.8" r="9.7"/><circle cx="1462" cy="743.8" r="9.7"/><circle cx="1494" cy="737.8" r="9.7"/><circle cx="1502" cy="731.8" r="9.7"/><circle cx="1548" cy="747.8" r="9.7"/><circle cx="1592" cy="731.8" r="9.7"/><circle cx="1474" cy="773.8" r="9.7"/><circle cx="1502" cy="769.8" r="9.7"/><circle cx="1498" cy="777.8" r="9.7"/><circle cx="1576" cy="773.8" r="9.7"/><circle cx="1526" cy="793.8" r="9.7"/><circle cx="1546" cy="805.8" r="9.7"/><circle cx="1406" cy="813.8" r="9.7"/><circle cx="1544" cy="846" r="9.7"/><circle cx="1548" cy="851" r="9.7"/><circle cx="1616" cy="718" r="9.7"/><circle cx="1704" cy="714" r="9.7"/><circle cx="1764" cy="723.8" r="9.7"/><circle cx="1778" cy="725.8" r="9.7"/><circle cx="1710" cy="749.8" r="9.7"/><circle cx="1728" cy="749.8" r="9.7"/><circle cx="1750" cy="747.8" r="9.7"/><circle cx="1806" cy="745.8" r="9.7"/><circle cx="1756" cy="765.8" r="9.7"/><circle cx="1684" cy="767.8" r="9.7"/><circle cx="1686" cy="773.8" r="9.7"/><circle cx="1612" cy="771.8" r="9.7"/><circle cx="1634" cy="777.8" r="9.7"/><circle cx="1738" cy="787.8" r="9.7"/><circle cx="1682" cy="801.8" r="9.7"/><circle cx="1694" cy="809.8" r="9.7"/><circle cx="1624" cy="815.8" r="9.7"/><circle cx="1718" cy="816.8" r="9.7"/><circle cx="1742" cy="809.8" r="9.7"/><circle cx="1742" cy="815.8" r="9.7"/><circle cx="1782" cy="815.8" r="9.7"/><circle cx="1712" cy="828" r="9.7"/><circle cx="1708" cy="834" r="9.7"/><circle cx="1755.5" cy="826.5" r="9.7"/><circle cx="1753" cy="832" r="9.7"/><circle cx="1824" cy="792" r="9.7"/><circle cx="1850" cy="719.8" r="9.7"/><circle cx="1840" cy="729.8" r="9.7"/><circle cx="1844" cy="751.8" r="9.7"/><circle cx="1888" cy="753.8" r="9.7"/><circle cx="1888" cy="769.8" r="9.7"/><circle cx="1946" cy="729.8" r="9.7"/><circle cx="1930" cy="765.8" r="9.7"/><circle cx="1928" cy="787.8" r="9.7"/><circle cx="1934" cy="787.8" r="9.7"/><circle cx="1918" cy="809.8" r="9.7"/><circle cx="1934" cy="809.8" r="9.7"/><circle cx="1902" cy="817.8" r="9.7"/><circle cx="1944" cy="831.8" r="9.7"/><circle cx="1876" cy="847.8" r="9.7"/><circle cx="1964" cy="851.8" r="9.7"/><circle cx="1482" cy="861.8" r="9.7"/><circle cx="1552" cy="861.8" r="9.7"/><circle cx="1592" cy="858.8" r="9.7"/><circle cx="1496" cy="897.8" r="9.7"/><circle cx="1460" cy="921.8" r="9.7"/><circle cx="1558" cy="941.8" r="9.7"/><circle cx="1704" cy="854" r="9.7"/><circle cx="1726" cy="851" r="9.7"/><circle cx="1724" cy="858" r="9.7"/><circle cx="1698" cy="879.8" r="9.7"/><circle cx="1734" cy="875.8" r="9.7"/><circle cx="1792" cy="875.8" r="9.7"/><circle cx="1752" cy="899.8" r="9.7"/><circle cx="1740" cy="909.8" r="9.7"/><circle cx="1760" cy="919.8" r="9.7"/><circle cx="1746" cy="931.8" r="9.7"/><circle cx="1778" cy="947.8" r="9.7"/><circle cx="1830" cy="849.8" r="9.7"/><circle cx="1910" cy="873.8" r="9.7"/><circle cx="1914" cy="893.8" r="9.7"/><circle cx="1900" cy="903.8" r="9.7"/><circle cx="1876" cy="899.8" r="9.7"/><circle cx="1972" cy="909.8" r="9.7"/><circle cx="2018" cy="955.8" r="9.7"/></g></svg>
<div class="t" style="left:905px;top:389.31px;font-size:25.5px;line-height:25.5px;color:#666;font-weight:normal;font-style:normal;transform:translateX(-100%);">0.015</div>
<div class="t" style="left:905px;top:485.31px;font-size:25.5px;line-height:25.5px;color:#666;font-weight:normal;font-style:normal;transform:translateX(-100%);">0.010</div>
<div class="t" style="left:905px;top:579.31px;font-size:25.5px;line-height:25.5px;color:#666;font-weight:normal;font-style:normal;transform:translateX(-100%);">0.005</div>
<div class="t" style="left:905px;top:675.71px;font-size:25.5px;line-height:25.5px;color:#666;font-weight:normal;font-style:normal;transform:translateX(-100%);">0.000</div>
<div class="t" style="left:905px;top:769.31px;font-size:25.5px;line-height:25.5px;color:#666;font-weight:normal;font-style:normal;transform:translateX(-100%);">-0.005</div>
<div class="t" style="left:905px;top:865.31px;font-size:25.5px;line-height:25.5px;color:#666;font-weight:normal;font-style:normal;transform:translateX(-100%);">-0.010</div>
<div class="t" style="left:905px;top:959.31px;font-size:25.5px;line-height:25.5px;color:#666;font-weight:normal;font-style:normal;transform:translateX(-100%);">-0.015</div>
<div class="t" style="left:905px;top:1053.31px;font-size:25.5px;line-height:25.5px;color:#666;font-weight:normal;font-style:normal;transform:translateX(-100%);">-0.020</div>
<div class="t" style="left:905px;top:1140.91px;font-size:25.5px;line-height:25.5px;color:#666;font-weight:normal;font-style:normal;transform:translateX(-100%);">-0.025</div>
<div class="t" style="left:988px;top:1189.91px;font-size:25.5px;line-height:25.5px;color:#666;font-weight:normal;font-style:normal;transform:translateX(-50%);">-0.030</div>
<div class="t" style="left:1100px;top:1189.91px;font-size:25.5px;line-height:25.5px;color:#666;font-weight:normal;font-style:normal;transform:translateX(-50%);">-0.025</div>
<div class="t" style="left:1212px;top:1189.91px;font-size:25.5px;line-height:25.5px;color:#666;font-weight:normal;font-style:normal;transform:translateX(-50%);">-0.020</div>
<div class="t" style="left:1324px;top:1189.91px;font-size:25.5px;line-height:25.5px;color:#666;font-weight:normal;font-style:normal;transform:translateX(-50%);">-0.015</div>
<div class="t" style="left:1436px;top:1189.91px;font-size:25.5px;line-height:25.5px;color:#666;font-weight:normal;font-style:normal;transform:translateX(-50%);">-0.010</div>
<div class="t" style="left:1546px;top:1189.91px;font-size:25.5px;line-height:25.5px;color:#666;font-weight:normal;font-style:normal;transform:translateX(-50%);">-0.005</div>
<div class="t" style="left:1658px;top:1189.91px;font-size:25.5px;line-height:25.5px;color:#666;font-weight:normal;font-style:normal;transform:translateX(-50%);">-0.000</div>
<div class="t" style="left:1770px;top:1189.91px;font-size:25.5px;line-height:25.5px;color:#666;font-weight:normal;font-style:normal;transform:translateX(-50%);">0.005</div>
<div class="t" style="left:1882px;top:1189.91px;font-size:25.5px;line-height:25.5px;color:#666;font-weight:normal;font-style:normal;transform:translateX(-50%);">0.010</div>
<div class="t" style="left:1994px;top:1189.91px;font-size:25.5px;line-height:25.5px;color:#666;font-weight:normal;font-style:normal;transform:translateX(-50%);">0.015</div>
<div class="t" style="left:2106px;top:1189.91px;font-size:25.5px;line-height:25.5px;color:#666;font-weight:normal;font-style:normal;transform:translateX(-50%);">0.020</div>
<div class="t" style="left:1543px;top:1239.36px;font-size:23.2px;line-height:23.2px;color:#2a2a2a;font-weight:normal;font-style:normal;transform:translateX(-50%);-webkit-text-stroke:0.45px #2a2a2a;">PC1</div>
<div class="t" style="left:803.5px;top:736.5px;font-size:23.5px;line-height:24px;color:#2a2a2a;-webkit-text-stroke:0.45px #2a2a2a;transform:translate(-50%,-50%) rotate(-90deg)">PC2</div>
<svg class="s" style="left:0px;top:1312px;" width="600" height="62" viewBox="0 1312 600 62"><ellipse cx="28" cy="1335.2" rx="7.1" ry="3.6" stroke="#5a5a5a" stroke-width="1.7" fill="none"/><path d="M20.9 1335.2 V1348.4 A7.1 3.6 0 0 0 35.1 1348.4 V1335.2" stroke="#5a5a5a" stroke-width="1.7" fill="none"/><rect x="260" y="1314" width="2" height="57" fill="#cdcdcd"/><rect x="376" y="1314" width="2" height="57" fill="#cdcdcd"/><rect x="439" y="1314" width="2" height="57" fill="#cdcdcd"/><rect x="503" y="1314" width="2" height="57" fill="#cdcdcd"/><rect x="567" y="1314" width="2" height="57" fill="#cdcdcd"/><path d="M407.5 1350.8 H397.7 V1331.2 H417 V1342" stroke="#666" stroke-width="1.9" fill="none" stroke-linejoin="round"/><rect x="401.1" y="1342" width="1.7" height="3.5" fill="#666"/><rect x="406.2" y="1336" width="1.7" height="9.5" fill="#666"/><rect x="411.2" y="1339.3" width="1.7" height="6.2" fill="#666"/><rect x="411.3" y="1350.1" width="13.5" height="3.8" fill="#666"/><rect x="416.1" y="1345.5" width="3.8" height="13" fill="#666"/><path d="M471 1350.8 H461.3 V1331.2 H480.6 V1340.7 H461.3 M471 1331.2 V1350.8" stroke="#666" stroke-width="1.9" fill="none" stroke-linejoin="round"/><rect x="475.3" y="1350.1" width="13.5" height="3.8" fill="#666"/><rect x="480.1" y="1345.5" width="3.8" height="13" fill="#666"/><path d="M535 1353.3 L525.2 1349.3 V1331.5 L535 1335.3 L544.8 1331.5 V1342 M535 1335.3 V1353.3" stroke="#666" stroke-width="1.9" fill="none" stroke-linejoin="round"/><rect x="539.3" y="1350.1" width="13.5" height="3.8" fill="#666"/><rect x="544.1" y="1345.5" width="3.8" height="13" fill="#666"/></svg>
<div class="t" style="left:47.5px;top:1332.48px;font-size:24px;line-height:24px;color:#555;font-weight:normal;font-style:normal;">Data Source</div>
<div class="t" style="left:273px;top:1332.48px;font-size:24px;line-height:24px;color:#444;font-weight:bold;font-style:normal;">Sheet 1</div>
<div class="t" style="left:24px;top:1383.00px;font-size:21.5px;line-height:21.5px;color:#222;font-weight:normal;font-style:normal;">227 marks</div>
<div class="t" style="left:156.2px;top:1383.42px;font-size:21px;line-height:21px;color:#222;font-weight:normal;font-style:normal;">1 row by 1 column</div>
<svg class="s" style="left:1400px;top:1372px;" width="786" height="38" viewBox="1400 1372 786 38"><rect x="1445.4" y="1374" width="2" height="36" fill="#c6c6c6"/><rect x="1699.7" y="1374" width="2" height="36" fill="#c6c6c6"/><rect x="1754" y="1374" width="2" height="36" fill="#c6c6c6"/><rect x="1807.7" y="1374" width="2" height="36" fill="#c6c6c6"/><rect x="1902.1" y="1374" width="2" height="36" fill="#c6c6c6"/><rect x="2044" y="1374" width="2" height="36" fill="#c6c6c6"/><rect x="1920" y="1386" width="1.8" height="13.8" fill="#b0b0b0"/><path d="M1932 1386 V1399.8 L1923.9 1392.9 Z" fill="#b0b0b0"/><path d="M1961.8 1386 V1399.8 L1954 1392.9 Z" fill="#b0b0b0"/><path d="M1985.9 1386 V1399.8 L1994 1392.9 Z" fill="#b0b0b0"/><path d="M2016 1386 V1399.8 L2024 1392.9 Z" fill="#b0b0b0"/><rect x="2026" y="1386" width="1.8" height="13.8" fill="#b0b0b0"/><rect x="2063.0" y="1382.9" width="5.7" height="5.7" rx="0.8" fill="#b0b0b0"/><rect x="2063.0" y="1391.0" width="5.7" height="5.7" rx="0.8" fill="#b0b0b0"/><rect x="2063.0" y="1399.1000000000001" width="5.7" height="5.7" rx="0.8" fill="#b0b0b0"/><rect x="2071.1" y="1382.9" width="5.7" height="5.7" rx="0.8" fill="#b0b0b0"/><rect x="2071.1" y="1391.0" width="5.7" height="5.7" rx="0.8" fill="#b0b0b0"/><rect x="2071.1" y="1399.1000000000001" width="5.7" height="5.7" rx="0.8" fill="#b0b0b0"/><rect x="2079.2" y="1382.9" width="5.7" height="5.7" rx="0.8" fill="#b0b0b0"/><rect x="2079.2" y="1391.0" width="5.7" height="5.7" rx="0.8" fill="#b0b0b0"/><rect x="2079.2" y="1399.1000000000001" width="5.7" height="5.7" rx="0.8" fill="#b0b0b0"/><rect x="2105" y="1382.9" width="22" height="13.9" rx="0.8" fill="#b0b0b0"/><rect x="2105.0" y="1399.2" width="5.7" height="5.7" rx="0.8" fill="#b0b0b0"/><rect x="2113.1" y="1399.2" width="5.7" height="5.7" rx="0.8" fill="#b0b0b0"/><rect x="2121.2" y="1399.2" width="5.7" height="5.7" rx="0.8" fill="#b0b0b0"/><rect x="2147" y="1382.9" width="22" height="22" rx="1" fill="#616161"/></svg>
</body></html>
